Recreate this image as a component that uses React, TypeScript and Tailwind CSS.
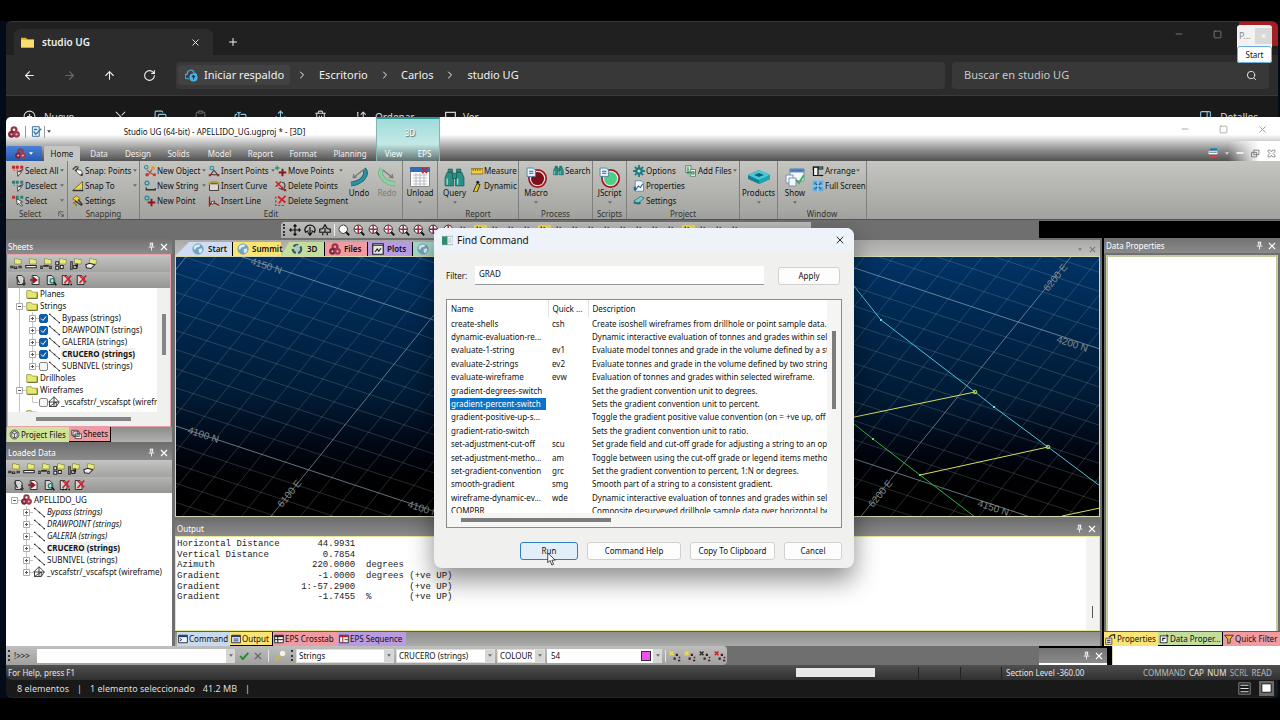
import { ReactNode } from 'react';
import { ArrowLeft, ArrowRight, ArrowUp, RotateCw, X, Plus, ChevronRight, Search, Minus, Square, Scissors, Copy, Clipboard, Trash2, CirclePlus, ArrowDownUp, PanelRight, TextCursorInput, Share } from 'lucide-react';

// ============ Data ============
interface Command {
  name: string;
  quick: string;
  description: string;
}

const COMMANDS: Command[] = [
  { name: 'create-shells', quick: 'csh', description: 'Create isoshell wireframes from drillhole or point sample data.' },
  { name: 'dynamic-evaluation-re...', quick: '', description: 'Dynamic interactive evaluation of tonnes and grades within selected' },
  { name: 'evaluate-1-string', quick: 'ev1', description: 'Evaluate model tonnes and grade in the volume defined by a string' },
  { name: 'evaluate-2-strings', quick: 'ev2', description: 'Evaluate tonnes and grade in the volume defined by two strings' },
  { name: 'evaluate-wireframe', quick: 'evw', description: 'Evaluation of tonnes and grades within selected wireframe.' },
  { name: 'gradient-degrees-switch', quick: '', description: 'Set the gradient convention unit to degrees.' },
  { name: 'gradient-percent-switch', quick: '', description: 'Sets the gradient convention unit to percent.' },
  { name: 'gradient-positive-up-s...', quick: '', description: 'Toggle the gradient positive value convention (on = +ve up, off' },
  { name: 'gradient-ratio-switch', quick: '', description: 'Sets the gradient convention unit to ratio.' },
  { name: 'set-adjustment-cut-off', quick: 'scu', description: 'Set grade field and cut-off grade for adjusting a string to an optimum' },
  { name: 'set-adjustment-metho...', quick: 'am', description: 'Toggle between using the cut-off grade or legend items method' },
  { name: 'set-gradient-convention', quick: 'grc', description: 'Set the gradient convention to percent, 1:N or degrees.' },
  { name: 'smooth-gradient', quick: 'smg', description: 'Smooth part of a string to a consistent gradient.' },
  { name: 'wireframe-dynamic-ev...', quick: 'wde', description: 'Dynamic interactive evaluation of tonnes and grades within selected' },
  { name: 'COMPBR', quick: '', description: 'Composite desurveyed drillhole sample data over horizontal benches' },
];

const OUTPUT_LINES = [
  'Horizontal Distance       44.9931',
  'Vertical Distance          0.7854',
  'Azimuth                  220.0000  degrees',
  'Gradient                  -1.0000  degrees (+ve UP)',
  'Gradient               1:-57.2900          (+ve UP)',
  'Gradient                  -1.7455  %       (+ve UP)',
];

const SHEET_STRINGS = [
  { name: 'Bypass (strings)', on: true },
  { name: 'DRAWPOINT (strings)', on: true },
  { name: 'GALERIA (strings)', on: true },
  { name: 'CRUCERO (strings)', on: true },
  { name: 'SUBNIVEL (strings)', on: false },
];

// ============ Icons ============
const Icon = ({ children, className = 'size-3' }: { children: ReactNode; className?: string }) => (
  <svg viewBox="0 0 16 16" fill="none" className={`${className} shrink-0`}>{children}</svg>
);

const Caret = ({ className = 'fill-[#6a6a6a]' }: { className?: string }) => (
  <svg viewBox="0 0 6 4" className={`h-[3px] w-[4px] shrink-0 ${className}`}><path d="M0 0h6L3 4z" /></svg>
);

const Trefoil = ({ className = 'size-3' }: { className?: string }) => (
  <Icon className={className}>
    <circle cx="8" cy="5" r="3.2" stroke="#9c3448" strokeWidth="3" />
    <circle cx="4.6" cy="11" r="3" fill="#e3b4bc" stroke="#7f2437" strokeWidth="3" />
    <circle cx="11.4" cy="11" r="3" fill="#e3b4bc" stroke="#a03c50" strokeWidth="3" />
  </Icon>
);

const Globe = () => (
  <Icon>
    <circle cx="8" cy="8" r="7" fill="#6fa5c4" />
    <path d="M3 4c2-2 5-3 8-2l-1 3-4 1-2 3-2-1zM9 8l4-1 1 3-3 4-2-2z" fill="#dcecf3" />
    <circle cx="8" cy="8" r="7" stroke="#7fa5bb" />
  </Icon>
);

const Pin = () => (
  <Icon className="size-[9px]"><path d="M5 2h6M6 2v6M10 2v6M9 2v6M3 9h10M8 9v6" stroke="#fff" strokeWidth="1.5" /></Icon>
);

const Cross = ({ className = 'size-[8px]', color = '#fff' }: { className?: string; color?: string }) => (
  <Icon className={className}><path d="M2 2l12 12M14 2L2 14" stroke={color} strokeWidth="2.4" /></Icon>
);

const Folder = () => (
  <Icon className="size-3"><path d="M1 3.5h6l1.5 2H15v8H1z" fill="#e5e86a" stroke="#8d8f3c" /><path d="M15 6v8H2" stroke="#55561f" /></Icon>
);

const StringLine = () => (
  <Icon className="size-[11px]"><path d="M1 2l14 12" stroke="#222" strokeWidth="1.2" /><path d="M0 1h2v2H0zM7 7h2v2H7zM14 13h2v2h-2z" fill="#222" /></Icon>
);

const Mesh = () => (
  <Icon className="size-[12px]"><path d="M8 1l7 7-4 6H2V8H1zM8 1v13M1 8h14M2 14l9-6v6" stroke="#222" strokeWidth="1.1" /></Icon>
);

const SelectIcon = ({ tone }: { tone: string }) => (
  <Icon>
    <path d="M0 1h4v4H0zM5 1h4v4H5zM11 1h4v4h-4z" fill={tone} />
    <path d="M2 6h2v2H2zM6 6h2v2H6z" fill={tone} opacity=".6" />
    <path d="M15 6l-6 3-1 6" stroke="#3c3c3c" strokeWidth="1.6" /><path d="M7 9l6 0-5 6z" fill="#f4f4f4" stroke="#333" />
  </Icon>
);

const SelectArrow = () => (
  <Icon>
    <path d="M0 1h4v4H0z" fill="#c33" /><path d="M5 1h4v4H5zM11 1h4v4h-4z" fill="#28827c" />
    <path d="M6 5l8 4-3 1 3 4-2 1-3-4-2 2z" fill="#fff" stroke="#222" />
  </Icon>
);

const SnapPoints = () => (
  <Icon><path d="M1 6l4-4 4 1M4 8l4-4" stroke="#333" strokeWidth="1.5" /><path d="M6 6l6 1 2 4-3 3-5-5z" fill="#fff" stroke="#333" /><circle cx="13" cy="13" r="1.6" fill="#333" /></Icon>
);
const SnapTo = () => (
  <Icon><path d="M1 14L14 2v12z" fill="#f1d648" stroke="#5c4f14" /><path d="M1 14h14" stroke="#333" strokeWidth="2" /><path d="M9 12l3-3v3z" fill="#b8b8b4" /></Icon>
);
const SnapSettings = () => (
  <Icon><path d="M1 5l5-4 5 4-4 4z" fill="#f3d434" stroke="#6d5b0e" /><path d="M4 8l9 6M8 6l6 7M2 10l4 4" stroke="#333" strokeWidth="1.6" /><circle cx="3" cy="13" r="2" fill="#d8a91f" /></Icon>
);
const NewObject = () => (
  <Icon><path d="M4 7l4 3 4-6M8 10l-3 4M8 10l6 4" stroke="#b4503c" strokeWidth="1.6" /><circle cx="12" cy="4" r="2.6" fill="#e79a32" /><circle cx="4" cy="13" r="2.3" fill="#c33" /><circle cx="14" cy="13" r="2" fill="#c33" /><circle cx="3" cy="3" r="2.3" stroke="#1d8f9a" strokeWidth="1.4" /></Icon>
);
const NewString = () => (
  <Icon><circle cx="4" cy="4" r="2.6" stroke="#1d8f9a" strokeWidth="1.6" /><path d="M3 10v3h12v-2" stroke="#333" strokeWidth="1.8" /></Icon>
);
const NewPoint = () => (
  <Icon><circle cx="4" cy="4" r="2.6" stroke="#1d8f9a" strokeWidth="1.6" /><path d="M10 5v10M5 10h10" stroke="#8e1420" strokeWidth="2.6" /></Icon>
);
const InsertPoints = () => (
  <Icon><circle cx="5" cy="4" r="2.4" stroke="#1d8f9a" strokeWidth="1.5" /><path d="M2 13h13M4 12l4-5 5 6" stroke="#333" strokeWidth="1.4" /><path d="M1 12h3v3H1zM12 12h3v3h-3z" fill="#a02a2a" /></Icon>
);
const InsertCurve = () => (
  <Icon><path d="M2 5h12v9H2z" fill="#d9d9cf" stroke="#333" strokeWidth="1.2" /><path d="M1 6c3-5 11-5 14 0" stroke="#b89318" strokeWidth="2" /></Icon>
);
const InsertLine = () => (
  <Icon><path d="M2 2v12l3-4 4 1 6 3" stroke="#a11c1c" strokeWidth="1.8" /><path d="M4 9l5-1-3 5z" fill="#fff" stroke="#333" /></Icon>
);
const MovePoints = () => (
  <Icon><path d="M3 1v6M0 4h6" stroke="#2c9a58" strokeWidth="1.8" /><path d="M10 5v10M5 10h10" stroke="#8e1420" strokeWidth="2.6" /></Icon>
);
const DeletePoints = () => (
  <Icon><path d="M1 2l7 7M8 2L1 9" stroke="#c8232c" strokeWidth="2.2" /><path d="M9 3c5 0 6 7 1 10M5 11l9 3" stroke="#444" strokeWidth="1.5" /><path d="M8 9h3v3H8zM12 12h3v3h-3z" fill="#a02a2a" /></Icon>
);
const DeleteSegment = () => (
  <Icon><path d="M1 2v12h13" stroke="#b33" strokeWidth="1.6" strokeDasharray="3 2" /><path d="M4 2l10 8M14 1L5 11" stroke="#d4202a" strokeWidth="2.4" /></Icon>
);
const Curl = ({ stroke, edge, flip = false }: { stroke: string; edge: string; flip?: boolean }) => (
  <svg viewBox="0 0 20 20" fill="none" className={flip ? 'size-5 -scale-x-100' : 'size-5'}>
    <path d="M15 2c5 6-3 14-13 15" stroke={edge} strokeWidth="4.600" />
    <path d="M15 2c5 6-3 14-13 15" stroke={stroke} strokeWidth="3" />
    <path d="M4 11L14 3M4 11l4-1M4 11l1-4" stroke="#777" strokeWidth="1.2" />
  </svg>
);
const UnloadIcon = () => (
  <svg viewBox="0 0 20 20" className="size-5">
    <path d="M.5 1h19v18.500H.5z" fill="#fff" stroke="#888" /><path d="M0 0h20v5H0z" fill="#2f6db5" />
    <path d="M3 8h14M3 11h14M3 14h14M3 17h14M6 6v13M10 6v13M14 6v13" stroke="#b7bcc4" /><path d="M12 1l5 5M17 1l-5 5" stroke="#d0202a" strokeWidth="1.8" />
  </svg>
);
const Binoculars = ({ className = 'size-[21px]', fill = '#2b8f86' }: { className?: string; fill?: string }) => (
  <svg viewBox="0 0 20 20" className={`${className} shrink-0`} fill={fill} stroke="#135a55" strokeWidth=".7">
    <path d="M4 2h4v3H4zM12 2h4v3h-4zM3 5h5l1 5v8H1v-8zM12 5h5l2 5v8h-8v-8z" /><path d="M8 6h4v5H8z" /><path d="M3 11v6M13 11v6" stroke="#8fd8cf" strokeWidth="1.4" />
  </svg>
);
const Ruler = () => <Icon><path d="M0 5h16v7H0z" fill="#f0cf3e" stroke="#70580c" /><path d="M3 5v3M6 5v3M9 5v3M12 5v3" stroke="#5b480b" /></Icon>;
const Dynamic = () => <Icon><circle cx="9" cy="3" r="2" fill="#222" /><path d="M8 5l4 1-4 10H3l3-7z" fill="#e8c81e" stroke="#222" strokeWidth="1.2" /></Icon>;
const Disc = ({ fill }: { fill: string }) => (
  <svg viewBox="0 0 20 20" className="size-[21px]">
    <circle cx="11" cy="11" r="8.200" fill="#e9e2e2" stroke="#a31420" strokeWidth="1.6" /><circle cx="11" cy="11" r="6.200" fill={fill} />
    <path d="M1 1h6l2 2v6H1z" fill="#e9f2f6" stroke="#4a7a9a" strokeWidth=".8" /><path d="M3 4h4M3 6h4" stroke="#2463a6" />
  </svg>
);
const Gear = () => <Icon><circle cx="8" cy="8" r="5" fill="#1c7d87" /><path d="M8 0v16M0 8h16M2.500 2.500l11 11M13.500 2.500l-11 11" stroke="#1c7d87" strokeWidth="2.4" /><circle cx="8" cy="8" r="2" fill="#cfd4d2" /></Icon>;
const PropsIcon = () => <Icon><path d="M3 1h8l3 3v11H3z" fill="#f5f8fa" stroke="#5a7890" /><path d="M4 13l3-5 3 2 3-5" stroke="#1e6fb0" strokeWidth="1.6" /><path d="M1 9h3v5H1z" fill="#2a5f9a" /></Icon>;
const SetIcon = () => <Icon><path d="M1 8l9-6 5 2-8 7z" fill="#7ac9d0" stroke="#256e78" /><path d="M1 11c3-2 5 3 9-1" stroke="#256e78" strokeWidth="2.4" /></Icon>;
const AddFiles = () => <Icon><path d="M1 1h7v9H1z" fill="#e8efe9" stroke="#3a6c4a" /><path d="M7 6h7v9H7z" fill="#fff" stroke="#3a6c4a" /><path d="M4 3v8l3-2M9 9h3v3H9z" stroke="#1f8c4d" strokeWidth="1.6" /></Icon>;
const Products = () => (
  <svg viewBox="0 0 22 20" className="h-5 w-[22px]">
    <path d="M0 8l11-5 11 5v4l-11 5-11-5z" fill="#167f90" /><path d="M0 8l11-5 11 5-11 5z" fill="#45cbd8" /><path d="M6 8l5-2 5 2-5 2z" fill="#0f5f70" /><path d="M11 13l11-5v4l-11 5z" fill="#1ca3b4" />
  </svg>
);
const ShowIcon = () => (
  <svg viewBox="0 0 20 20" className="size-5" fill="#f4f8fc" stroke="#7d93ad">
    <path d="M5 2h14v12H5z" /><path d="M5 2h14v3H5z" fill="#3c78c4" /><path d="M1 8h7v8H1z" /><path d="M4 11h7v8H4z" /><path d="M11 13l3 3 5-8" fill="none" stroke="#3fae62" strokeWidth="2" />
  </svg>
);
const Arrange = () => <Icon><path d="M1 2h14v4H1z" fill="#111" /><path d="M2 3h6v11H2z" fill="#f4f4f4" stroke="#111" strokeWidth="1.6" /><path d="M9 3h5v2H9z" fill="#30a0a0" /><path d="M9 14h6" stroke="#111" strokeWidth="1.6" /></Icon>;
const FullScreen = () => <Icon><path d="M1 1h14v14H1z" fill="#5aa6d8" stroke="#8dc0e2" /><path d="M8 1v14M1 8h14" stroke="#d8eefa" /><path d="M4 4l3 3M12 4L9 7M4 12l3-3M12 12L9 9" stroke="#135080" strokeWidth="1.4" /></Icon>;

const NavIcon = ({ kind }: { kind: 'move' | 'rotate' | 'fly' }) => (
  <Icon className="size-[12px]">
    {kind === 'move' && <path d="M8 1v14M1 8h14M6 3l2-2 2 2M6 13l2 2 2-2M3 6L1 8l2 2M13 6l2 2-2 2" stroke="#111" strokeWidth="1.6" />}
    {kind === 'rotate' && <path d="M1 9c0-10 14-10 14 0M8 4v10M5 11l3 4 3-4M1 7l1 4 4-2M15 7l-1 4-4-2" stroke="#111" strokeWidth="1.6" />}
    {kind === 'fly' && <path d="M8 1l3 5 4 1v4H1V7l4-1zM5 12v3M11 12v3M8 5v6" stroke="#111" strokeWidth="1.6" />}
  </Icon>
);
const ZoomIcon = ({ tint }: { tint: string }) => (
  <Icon className="size-[12px]">
    <circle cx="7" cy="7" r="5.500" fill="#fff" stroke="#222" strokeWidth="1.3" /><path d="M7 2v10M2 7h10" stroke={tint} strokeWidth="2" /><path d="M11 11l4 4" stroke="#111" strokeWidth="2.4" />
  </Icon>
);

const FOLDER_TOOLS = [
  'M1 11h3v2H1zM6 12h3v2H6zM12 11h3v2h-3z',
  'M1 10h14v3H1z',
  'M1 11h2v3H1zM5 10h6v1H5zM13 11h2v3h-2z',
  'M1 5h4v4H1zM1 11h4v4H1zM7 10h4v4H7z',
  'M1 5h2v10H1zM5 10h4v4H5zM8 8h2v4H8z',
  'M1 9l5-2 7 2-5 5-6-1z',
];

const PanelTools = () => (
  <>
    <div className="flex h-[17px] items-center gap-[3px] bg-gradient-to-b from-[#c4c4c2] to-[#a3a3a1] pl-[2px]">
      {FOLDER_TOOLS.map((d) => (
        <button key={d} title="Folder tool" className="flex">
          <Icon><path d="M6 1h4l1 1h4v6H6z" fill="#e9ea7c" stroke="#77783a" strokeWidth=".8" /><path d={d} fill="#eef0ee" stroke="#2a2a2a" strokeWidth="1.4" /></Icon>
        </button>
      ))}
    </div>
    <div className="flex h-4 items-center gap-[3px] bg-gradient-to-b from-[#b4b4b2] to-[#959593] pl-[7px]">
      {['attach', 'import', 'find', 'unload', 'remove'].map((t, i) => (
        <button key={t} title={t} className="flex">
          <Icon>
            <path d="M3 2h6l3 3v9H3z" fill={i === 1 ? '#f4f4f4' : '#d5d5d3'} stroke="#222" strokeWidth="1.2" />
            {i === 0 && <path d="M2 4l4 8M12 8v6M10 12l2 3 2-3" stroke="#333" strokeWidth="1.5" />}
            {i === 1 && <path d="M0 8h7M5 5l4 3-4 3z" stroke="#a31420" fill="#a31420" strokeWidth="2" />}
            {i === 2 && <><circle cx="10" cy="9" r="3" stroke="#1d7a70" strokeWidth="1.6" /><path d="M12 11l3 4" stroke="#111" strokeWidth="2" /></>}
            {i > 2 && <path d="M6 2l9 9M15 2l-9 10" stroke="#d41e28" strokeWidth="2.2" />}
            {i === 3 && <path d="M6 14h2M10 14h2M14 14h2" stroke="#111" strokeWidth="2" />}
          </Icon>
        </button>
      ))}
    </div>
  </>
);

const PanelHeader = ({ title }: { title: string }) => (
  <header className="flex h-[15px] shrink-0 items-center gap-1 bg-gradient-to-b from-[#727272] to-[#8b8b8b] pr-1 pl-[2px] text-white">
    <h2 className="flex-1">{title}</h2>
    <button title="Auto hide" className="flex"><Pin /></button>
    <button title="Close" className="flex"><Cross /></button>
  </header>
);

// ============ Ribbon ============
const Item = ({ icon, label, menu = false }: { icon: ReactNode; label: string; menu?: boolean }) => (
  <button className="flex h-[15px] w-full items-center gap-px whitespace-nowrap">
    {icon}<span className="flex-1 text-left">{label}</span>{menu && <Caret />}
  </button>
);

const Big = ({ icon, label, menu = false, className = 'w-[34px]' }: { icon: ReactNode; label: string; menu?: boolean; className?: string }) => (
  <button className={`flex shrink-0 flex-col items-center pt-1 ${className}`}>
    <span className="flex h-5 items-center">{icon}</span>
    <span className="leading-3">{label}</span>
    {menu && <Caret className="mt-[2px] fill-[#6a6a6a]" />}
  </button>
);

const Group = ({ caption, className, launcher = false, children }: { caption?: string; className: string; launcher?: boolean; children: ReactNode }) => (
  <section className={`flex shrink-0 flex-col border-r border-[#7f7f7d] pt-[2px] ${className}`}>
    <div className="flex h-[45px]">{children}</div>
    <div className="flex h-[11px] items-center justify-center text-[#333]">
      <span className={launcher ? 'flex-1 pr-1 text-center' : ''}>{caption}</span>
      {launcher && <Icon className="mr-[3px] size-[6px]"><path d="M2 14V2h12M6 6l8 8M14 8v6H8" stroke="#444" strokeWidth="2" /></Icon>}
    </div>
  </section>
);

const Ribbon = () => (
  <div className="flex h-[59px] shrink-0 border-b border-[#555] bg-gradient-to-b from-[#c5c6c2] to-[#a2a39f] text-[#111]">
    <Group caption="Select" className="w-[62px]" launcher>
      <div className="w-full pr-[3px] pl-[6px]">
        <Item icon={<SelectIcon tone="#c8232c" />} label="Select All" menu />
        <Item icon={<SelectIcon tone="#28827c" />} label="Deselect" menu />
        <Item icon={<SelectArrow />} label="Select" menu />
      </div>
    </Group>
    <Group caption="Snapping" className="w-[72px]">
      <div className="w-full pr-[2px] pl-[4px]">
        <Item icon={<SnapPoints />} label="Snap: Points" menu />
        <Item icon={<SnapTo />} label="Snap To" menu />
        <Item icon={<SnapSettings />} label="Settings" />
      </div>
    </Group>
    <Group caption="Edit" className="w-[263px]">
      <div className="w-[68px] shrink-0 pr-[2px] pl-[4px]">
        <Item icon={<NewObject />} label="New Object" menu />
        <Item icon={<NewString />} label="New String" menu />
        <Item icon={<NewPoint />} label="New Point" />
      </div>
      <div className="w-[67px] shrink-0">
        <Item icon={<InsertPoints />} label="Insert Points" menu />
        <Item icon={<InsertCurve />} label="Insert Curve" />
        <Item icon={<InsertLine />} label="Insert Line" />
      </div>
      <div className="w-[70px] shrink-0 pr-[2px]">
        <Item icon={<MovePoints />} label="Move Points" menu />
        <Item icon={<DeletePoints />} label="Delete Points" />
        <Item icon={<DeleteSegment />} label="Delete Segment" />
      </div>
      <Big icon={<Curl stroke="#2a91a0" edge="#1d5f6a" />} label="Undo" className="w-[28px]" />
      <Big icon={<Curl stroke="#8fd0a4" edge="#6fae84" flip />} label="Redo" className="w-[28px] text-[#7c7c7a]" />
    </Group>
    <Group className="w-[35px]"><Big icon={<UnloadIcon />} label="Unload" menu /></Group>
    <Group caption="Report" className="w-[81px]">
      <Big icon={<Binoculars />} label="Query" menu className="w-[33px]" />
      <div className="flex-1">
        <Item icon={<Ruler />} label="Measure" />
        <Item icon={<Dynamic />} label="Dynamic" />
      </div>
    </Group>
    <Group caption="Process" className="w-[74px]">
      <Big icon={<Disc fill="#7c0f18" />} label="Macro" menu />
      <div className="flex-1"><Item icon={<Binoculars className="size-[11px]" />} label="Search" /></div>
    </Group>
    <Group caption="Scripts" className="w-[34px]"><Big icon={<Disc fill="#4ccf86" />} label="JScript" menu className="w-[33px]" /></Group>
    <Group caption="Project" className="w-[113px]">
      <div className="w-[58px] shrink-0 pl-[6px]">
        <Item icon={<Gear />} label="Options" />
        <Item icon={<PropsIcon />} label="Properties" />
        <Item icon={<SetIcon />} label="Settings" />
      </div>
      <div className="flex-1 pr-1"><Item icon={<AddFiles />} label="Add Files" menu /></div>
    </Group>
    <Group className="w-[38px]"><Big icon={<Products />} label="Products" menu className="w-[37px]" /></Group>
    <Group caption="Window" className="w-[89px]">
      <Big icon={<ShowIcon />} label="Show" menu />
      <div className="flex-1">
        <div className="pr-2"><Item icon={<Arrange />} label="Arrange" menu /></div>
        <Item icon={<FullScreen />} label="Full Screen" />
      </div>
    </Group>
  </div>
);

const RIBBON_TABS = [
  { label: 'Data', width: 'w-[38px]' },
  { label: 'Design', width: 'w-[40px]' },
  { label: 'Solids', width: 'w-[41px]' },
  { label: 'Model', width: 'w-[41px]' },
  { label: 'Report', width: 'w-[41px]' },
  { label: 'Format', width: 'w-[44px]' },
  { label: 'Planning', width: 'w-[50px]' },
];

const StudioHeader = () => (
  <header className="flex h-11 shrink-0 overflow-hidden rounded-tl-[5px] bg-gradient-to-b from-white from-40% via-[#8f8f8f] via-75% to-[#525252]">
    <div className="flex w-[370px] shrink-0 flex-col">
      <div className="flex h-[29px] items-center text-[#111]">
        <span className="ml-[2px] flex"><Trefoil className="size-[12px]" /></span>
        <span className="mx-[5px] h-3 w-px bg-[#999]" />
        <button title="Save" className="flex"><Icon className="size-[11px]"><path d="M2 1h10v14H2z" fill="#eef4f8" stroke="#3a6d90" strokeWidth="1.4" /><path d="M4 5h5M4 8l3 4 8-8" stroke="#2a7db8" strokeWidth="2" /></Icon></button>
        <span className="mx-[2px] h-3 w-px bg-[#999]" />
        <Caret className="fill-[#444]" />
        <h1 className="flex-1 pl-[2px] text-center">Studio UG (64-bit) - APELLIDO_UG.ugproj * - [3D]</h1>
      </div>
      <nav className="flex h-[15px] items-stretch text-[#eee]">
        <button title="Application menu" className="flex w-9 items-center justify-center gap-[3px] rounded-t-[2px] bg-gradient-to-b from-[#4d83d6] to-[#2459ad]">
          <Trefoil className="size-[11px]" /><Caret className="fill-white" />
        </button>
        <button className="ml-[2px] w-9 rounded-t-[2px] bg-[#c5c6c2] text-[#111]">Home</button>
        {RIBBON_TABS.map((t) => <button key={t.label} className={t.width}>{t.label}</button>)}
      </nav>
    </div>
    <div className="flex w-16 shrink-0 flex-col border-x border-t-2 border-x-[#84b5b5] border-t-[#2a9a9c] bg-gradient-to-b from-[#9fdcda] via-[#c4e9e6] via-60% to-[#5f7372] text-white">
      <div className="flex h-[27px] items-center justify-center pl-1 [text-shadow:1px_1px_1px_#555]">3D</div>
      <nav className="flex h-[15px]"><button className="w-[33px]">View</button><button className="flex-1">EPS</button></nav>
    </div>
    <div className="flex flex-1 flex-col items-end">
      <div className="flex h-6 items-center gap-[29px] pr-[12px] text-[#999]">
        <button title="Minimize"><Minus className="size-[10px]" /></button>
        <button title="Maximize"><Square className="size-[9px]" /></button>
        <button title="Close"><X className="size-[11px]" /></button>
      </div>
      <div className="flex flex-1 items-center gap-[7px] bg-gradient-to-r from-transparent from-50% to-white to-80% pt-1 pr-1 pl-8">
        <button title="Language" className="flex"><Icon className="size-[10px]"><path d="M4 0h11v4H4z" fill="#36a0c8" /><path d="M1 5h14v5H1z" fill="#fff" /><path d="M3 11h11v5H3z" fill="#d43d44" /><path d="M2 7h12M3 2h11" stroke="#245" /></Icon></button>
        <Caret className="fill-[#ddd]" />
        <button title="Minimize document"><Icon className="size-[8px]"><path d="M1 8h14" stroke="#fff" strokeWidth="3" /></Icon></button>
        <button title="Restore document"><Icon className="size-[9px]"><path d="M5 2h9v8H5zM1 6h9v8H1z" stroke="#777" strokeWidth="1.6" /></Icon></button>
        <button title="Close document"><Icon className="size-[9px]"><path d="M2 2h4l2 3 2-3h4v3l-3 3 3 3v3h-4l-2-3-2 3H2v-3l3-3-3-3z" stroke="#777" strokeWidth="1.4" /></Icon></button>
      </div>
    </div>
  </header>
);

const ZOOM_TINTS = ['#ffffff', '#b3243a', '#b3243a', '#c8405a', '#a32a3a', '#b3243a', '#8b1f4a', '#b3243a'];
const MORE_TOOLS = ['#b9b9b7', '#f0d75a', '#b9b9b7', '#b9b9b7', '#b9b9b7', '#f0d75a', '#b9b9b7', '#b9b9b7', '#b9b9b7', '#b9b9b7', '#b9b9b7', '#b9b9b7', '#b9b9b7', '#b9b9b7', '#f0d75a', '#b9b9b7', '#b9b9b7', '#b9b9b7'];

const ViewToolbar = () => (
  <div className="flex h-[18px] shrink-0 bg-[#6f6f6f]">
    <div className="mt-[2px] ml-[275px] flex w-[530px] shrink-0 items-center gap-[3px] overflow-hidden rounded-tl-sm bg-gradient-to-b from-[#bdbdbb] to-[#a9a9a7] pl-[2px]">
      <span className="mr-[1px] h-3 border-l-2 border-dotted border-[#333]" />
      <button title="Pan" className="flex"><NavIcon kind="move" /></button>
      <button title="Rotate" className="flex"><NavIcon kind="rotate" /></button>
      <button title="Fly" className="flex"><NavIcon kind="fly" /></button>
      <span className="h-3 w-px bg-[#eee]" />
      {ZOOM_TINTS.map((t, i) => <button key={i} title="Zoom" className="flex"><ZoomIcon tint={t} /></button>)}
      {MORE_TOOLS.map((c, i) => (
        <button key={i} title="Tool" className="flex">
          <Icon className="size-[13px]"><path d="M0 1h16v15H0z" fill={c} /><path d="M4 3v9M7 4l5 5M4 8h7" stroke="#3a3550" strokeWidth="1.6" /></Icon>
        </button>
      ))}
    </div>
    <div className="flex-1" />
    <div className="mt-px w-[241px] bg-black" />
  </div>
);

// ============ Trees ============
const Branch = ({ sign, last = false, line = true }: { sign?: '+' | '-'; last?: boolean; line?: boolean }) => (
  <span className="flex h-3 w-[13px] shrink-0 items-center justify-center">
    <svg viewBox="0 0 13 12" fill="none" className="h-3 w-[13px]">
      {line && <path d={last ? 'M6.500 0V6' : 'M6.500 0V12'} stroke="#c4c4c4" />}
      {sign && <><path d="M9 6.500h4" stroke="#c4c4c4" /><path d="M3.500 3.500h6v6h-6z" fill="#fff" stroke="#aaa" /><path d="M5 6.500h3" stroke="#555" /></>}
      {sign === '+' && <path d="M6.500 5v3" stroke="#555" />}
      {!sign && last && <path d="M6.500 6.500h6" stroke="#c4c4c4" />}
    </svg>
  </span>
);

const Check = ({ on }: { on: boolean }) => (
  <span className="relative flex size-[9px] shrink-0">
    <input type="checkbox" defaultChecked={on} className="peer size-[9px] appearance-none rounded-[2px] border border-[#888] bg-[#f6f6f6] checked:border-[#0b5cad] checked:bg-[#0b5cad]" />
    <svg viewBox="0 0 9 9" fill="none" className="pointer-events-none absolute inset-0 hidden peer-checked:block"><path d="M2 4.500l2 2 3-4" stroke="#fff" /></svg>
  </span>
);

const FolderRow = ({ label, sign }: { label: string; sign?: '+' | '-' }) => (
  <li className="flex h-3 items-center gap-[2px]"><span className="flex"><Branch sign={sign} /><Folder /></span>{label}</li>
);

const SheetsPanel = () => (
  <section>
    <div className="pt-px"><PanelHeader title="Sheets" /></div>
    <div className="mx-px border border-[#e8a0a8] bg-white">
      <PanelTools />
      <div className="flex h-[124px] overflow-hidden text-[#111]">
        <ul className="flex-1 overflow-hidden pl-[5px] whitespace-nowrap">
          <FolderRow label="Planes" />
          <FolderRow label="Strings" sign="-" />
          {SHEET_STRINGS.map((s, i) => (
            <li key={s.name} className="flex h-3 items-center">
              <Branch />
              <Branch sign="+" last={i === SHEET_STRINGS.length - 1} />
              <label className="flex items-center gap-[1px]">
                <Check on={s.on} /><StringLine />
                <span className={s.name.startsWith('CRUCERO') ? 'bg-[#f0f0f0] pl-px font-bold' : 'pl-px'}>{s.name}</span>
              </label>
            </li>
          ))}
          <FolderRow label="Drillholes" />
          <FolderRow label="Wireframes" sign="-" />
          <li className="flex h-3 items-center">
            <Branch /><Branch last />
            <label className="flex items-center"><Check on={false} /><Mesh /><span className="pl-px">_vscafstr/_vscafspt (wireframe)</span></label>
          </li>
          <FolderRow label="" />
        </ul>
        <div className="flex w-[13px] flex-col items-center bg-[#f0f0ee] pt-[26px]"><span className="h-[41px] w-1 bg-[#868686]" /></div>
      </div>
      <div className="flex h-[14px] items-center bg-[#f0f0ee] pl-[28px]"><span className="h-1 w-[95px] bg-[#868686]" /></div>
    </div>
    <div className="flex h-[15px] bg-gradient-to-b from-[#8d8d8b] to-[#b0b0ae] text-[#111]">
      <button className="ml-px flex w-[62px] items-center gap-px bg-[#cfe39a] pl-[2px] whitespace-nowrap">
        <Icon className="size-[11px]"><circle cx="8" cy="8" r="6.500" fill="#e8ecea" stroke="#222" /><path d="M4 5l4-2 4 2v6l-4 2-4-2zM4 5l4 2 4-2M8 7v6" stroke="#222" /></Icon>Project Files
      </button>
      <button className="flex w-[42px] items-center gap-px border-r border-b border-black bg-[#f09aa2] pl-[2px]">
        <Icon className="size-[11px]"><path d="M1 2h9v7H1zM3 4h9v7H3zM6 7h9v7H6z" fill="#f7f7f7" stroke="#222" /></Icon>Sheets
      </button>
    </div>
  </section>
);

const LoadedPanel = () => (
  <section className="mt-[3px] flex flex-1 flex-col">
    <PanelHeader title="Loaded Data" />
    <PanelTools />
    <ul className="flex-1 bg-white pt-px pl-[2px] whitespace-nowrap text-[#111]">
      <li className="flex h-3 items-center gap-[2px]"><span className="flex"><Branch sign="-" line={false} /><Trefoil className="size-[11px]" /></span>APELLIDO_UG</li>
      {SHEET_STRINGS.map((s) => {
        const style = s.name.startsWith('CRUCERO') ? 'bg-[#f0f0f0] font-bold' : s.on ? 'italic' : '';
        return (
          <li key={s.name} className="flex h-3 items-center pl-[12px]">
            <Branch sign="+" /><span className="pr-[2px] pl-[1px]"><StringLine /></span><span className={style}>{s.name}</span>
          </li>
        );
      })}
      <li className="flex h-3 items-center pl-[12px]"><Branch sign="+" last /><span className="pr-[2px]"><Mesh /></span>_vscafstr/_vscafspt (wireframe)</li>
    </ul>
  </section>
);

// ============ 3D view ============
// 5 m grid: northings step 19 px down the view, eastings 29.5 px across it
const northings = Array.from({ length: 42 }, (_, i) => i - 30);
const eastings = Array.from({ length: 45 }, (_, i) => i - 16);

const View3D = () => (
  <div className="min-h-0 flex-1 border border-[#d5d8b0] bg-gradient-to-b from-[#003366] via-[#001a33] via-55% to-black">
    <svg viewBox="176 257 923 259" preserveAspectRatio="xMinYMin slice" fill="none" className="size-full">
      {northings.map((n) => (
        <path key={n} d={`M100 ${401 + n * 19.1}l1100 363`} stroke="#9ab0bd" strokeOpacity={n % 10 === 0 ? 0.65 : 0.3} strokeWidth={n % 10 === 0 ? 1 : 0.8} />
      ))}
      {eastings.map((e) => (
        <path key={e} d={`M${309 + e * 29.5 + 200} 222.300l-300 370.500`} stroke="#9ab0bd" strokeOpacity={e % 10 === 0 ? 0.6 : 0.3} strokeWidth={e % 10 === 0 ? 1 : 0.8} />
      ))}
      <g fill="#80888c" fontSize="10" fontFamily="Liberation Sans, sans-serif">
        <text transform="translate(250 264) rotate(18)">4150 N</text>
        <text transform="translate(187 433) rotate(18)">4100 N</text>
        <text transform="translate(407 507) rotate(18)">4100 N</text>
        <text transform="translate(1056 342) rotate(18)">4200 N</text>
        <text transform="translate(977 506) rotate(18)">4150 N</text>
        <text transform="translate(282 508) rotate(-51)">6100 E</text>
        <text transform="translate(873 508) rotate(-51)">6200 E</text>
        <text transform="translate(1048 292) rotate(-51)">6200 E</text>
      </g>
      <path d="M840 268l14 18 27 34 94 72 19 15 54 40 52 39" stroke="#4fc3dc" />
      <path d="M840 420l135-28M920 475l128-28M1062 516l38-8" stroke="#d6dc5c" />
      <path d="M840 413l33 26 47 36 55 42" stroke="#2fb43c" />
      <g stroke="#b6e04c"><circle cx="975" cy="392" r="1.800" /><circle cx="1048" cy="447" r="1.800" /></g>
      <path d="M880 319h2v2h-2zM993 406h2v2h-2z" fill="#6fe0f0" /><path d="M872 438h2v2h-2zM919 474h2v2h-2z" fill="#6fe05c" />
    </svg>
  </div>
);

const DocTabs = () => (
  <div className="flex h-4 shrink-0 bg-gradient-to-b from-[#a9a9a7] to-[#c0c0be] pt-[2px] font-semibold text-[#111]">
    <button className="flex w-[57px] items-center gap-1 bg-[#cfdcf4] pl-[17px] [clip-path:polygon(14px_0,100%_0,100%_100%,0_100%)]"><Globe />Start</button>
    <button className="flex w-[49px] items-center gap-[3px] border-l border-black bg-[#fbe374] pl-[4px]"><Globe />Summit</button>
    <button className="flex w-[43px] items-center gap-1 bg-[#c3dd9c] pl-[10px] [clip-path:polygon(8px_0,100%_0,100%_100%,0_100%)]">
      <Icon><circle cx="8" cy="8" r="5.500" stroke="#3d5a66" strokeWidth="3" strokeDasharray="7 3" /><path d="M8 2l4 6-4 5-4-5z" fill="#a9c6d0" /></Icon>3D
    </button>
    <button className="flex w-[43px] items-center gap-[3px] border-l border-black bg-[#f09aa2] pl-[4px]"><Trefoil />Files</button>
    <button className="flex w-[45px] items-center gap-[3px] border-l border-black bg-[#b89be0] pl-[4px]">
      <Icon><path d="M1 1h14v14H1z" fill="#e6e6e6" stroke="#222" strokeWidth="1.6" /><path d="M1 3h14M4 12l3-4 2 3 3-4" stroke="#222" strokeWidth="1.6" /></Icon>Plots
    </button>
    <button title="VR" className="flex w-[60px] items-center border-l border-black bg-[#a5d8c8] pl-[4px]"><Globe /></button>
    <div className="flex flex-1 items-center justify-end gap-[7px] pr-1"><Caret className="fill-[#777]" /><Cross className="size-[7px]" color="#777" /></div>
  </div>
);

const BottomTab = ({ label, icon, className }: { label: string; icon: ReactNode; className: string }) => (
  <button className={`flex items-center gap-px pl-px whitespace-nowrap ${className}`}>{icon}{label}</button>
);

const WindowIcon = ({ mark = '#203a7a', d }: { mark?: string; d: string }) => (
  <Icon className="size-[10px]"><path d="M1 2h14v12H1z" fill="#f3f3f3" stroke="#222" strokeWidth="1.4" /><path d="M1 3.500h14" stroke={mark} strokeWidth="3" /><path d={d} stroke={mark} strokeWidth="1.6" /></Icon>
);

const Center = () => (
  <div className="mr-[2px] flex min-w-0 flex-1 flex-col pt-[2px]">
    <DocTabs />
    <View3D />
    <div className="mt-1 shrink-0"><PanelHeader title="Output" /></div>
    <div className="flex h-[95px] shrink-0 border border-[#e6e69a] bg-white">
      <div className="grid h-[66px] flex-1 grid-rows-6 pt-[2px] pl-[1px] text-[9px] text-[#222]">
        {OUTPUT_LINES.map((l) => <pre key={l} className="font-['Liberation_Mono',monospace] leading-[10px]">{l}</pre>)}
      </div>
      <div className="flex w-[13px] flex-col items-center justify-end bg-[#f3f3f1] pb-[12px]"><span className="h-3 w-px bg-[#555]" /></div>
    </div>
    <div className="flex h-[15px] shrink-0 border-t border-[#5c5c5c] bg-gradient-to-b from-[#8f8f8d] to-[#aaaaa8] text-[#111]">
      <BottomTab label="Command" icon={<WindowIcon d="M3 7l3 2-3 2" />} className="ml-[2px] w-[53px] bg-[#c6daf0]" />
      <BottomTab label="Output" icon={<WindowIcon d="M4 8h8M4 11h8" />} className="w-[43px] border-r border-b border-black bg-[#fbe374]" />
      <BottomTab label="EPS Crosstab" icon={<WindowIcon mark="#222" d="M6 4v10M1 9h14" />} className="w-[65px] bg-[#f09aa2]" />
      <BottomTab label="EPS Sequence" icon={<WindowIcon mark="#b3202c" d="M6 4v10M9 9h5" />} className="w-[68px] bg-[#b89be0]" />
    </div>
  </div>
);

const RightPanel = () => (
  <aside className="flex w-[178px] shrink-0 flex-col border-l-2 border-black">
    <PanelHeader title="Data Properties" />
    <div className="mx-[2px] mt-[2px] flex-1 border-x-2 border-t-2 border-[#c8c99c] bg-white" />
    <div className="flex h-[15px] border-t border-[#5c5c5c] text-[#111]">
      <BottomTab label="Properties" className="w-[54px] bg-[#fbe374]" icon={<Icon className="size-[11px]"><path d="M1 6h9v9H1z" fill="#eee" stroke="#222" /><path d="M3 9h5M3 12h5M6 5l3-3 5-1v6" stroke="#222" strokeWidth="1.6" /></Icon>} />
      <BottomTab label="Data Proper..." className="w-[65px] border-r border-b border-black bg-[#c3dd9c]" icon={<Icon className="size-[10px]"><path d="M2 3h11v11H2z" fill="#f7f7f7" stroke="#222" strokeWidth="1.4" /><path d="M6 11V7h4M12 1l3 3" stroke="#222" strokeWidth="1.8" /></Icon>} />
      <BottomTab label="Quick Filter" className="flex-1 bg-[#f09aa2]" icon={<Icon className="size-[10px]"><path d="M1 2h14l-5 6v6l-4 1V8z" fill="#e8b43a" stroke="#222" strokeWidth="1.3" /></Icon>} />
    </div>
  </aside>
);

// ============ Command and status bars ============
const Combo = ({ label, value, className }: { label: string; value: string; className: string }) => (
  <div className={`flex h-[14px] shrink-0 border border-[#ddd] bg-white ${className}`}>
    <select aria-label={label} className="min-w-0 flex-1 appearance-none bg-white pl-[2px] outline-none"><option>{value}</option></select>
    <span className="flex w-[9px] items-center justify-center bg-[#d6d6d4]"><Caret /></span>
  </div>
);

const EDIT_TOOLS = ['#e8e04a', '#e8e04a', '#333333', '#c8232c'];

const CommandBar = () => (
  <div className="flex h-[19px] shrink-0 bg-[#6f6f6f] text-[#111]">
    <div className="flex w-[721px] shrink-0 items-center rounded-r-sm bg-gradient-to-b from-[#bfbfbd] to-[#a0a09e]">
      <span className="ml-[2px] h-[11px] border-l-2 border-dotted border-[#333]" />
      <label htmlFor="cmd" className="w-[27px] pl-[4px]">!&gt;&gt;&gt;</label>
      <div className="flex h-[14px] w-[198px] bg-white">
        <input id="cmd" className="min-w-0 flex-1 px-[2px] outline-none" />
        <span className="flex w-[9px] items-center justify-center bg-[#d6d6d4]"><Caret /></span>
      </div>
      <button title="Accept" className="ml-[4px]"><Icon className="size-[10px]"><path d="M2 8l4 5 9-10" stroke="#1e8c2c" strokeWidth="3" /></Icon></button>
      <button title="Cancel command" className="ml-[5px]"><Cross className="size-[8px]" color="#666" /></button>
      <span className="mx-[6px] h-3 w-px bg-[#e4e4e4]" />
      <button title="Wand"><Icon className="size-[11px]"><path d="M1 15L9 7" stroke="#c9b93a" strokeWidth="2.4" /><circle cx="11" cy="5" r="4" fill="#f1f1e6" /></Icon></button>
      <span className="mr-[3px] ml-[5px] h-[11px] border-l-2 border-dotted border-[#333]" />
      <div className="flex flex-1 items-center gap-[2px]">
        <Combo label="Object type" value="Strings" className="w-[98px]" />
        <Combo label="Current object" value="CRUCERO (strings)" className="w-[99px]" />
        <Combo label="Attribute" value="COLOUR" className="w-[48px]" />
        <div className="flex h-[14px] w-[115px] items-center bg-white">
          <input aria-label="Attribute value" defaultValue="54" className="min-w-0 flex-1 px-1 outline-none" />
          <span className="mr-[2px] size-[10px] border border-[#333] bg-[#f04ff0]" />
          <span className="flex h-full w-[9px] items-center justify-center bg-[#d6d6d4]"><Caret /></span>
        </div>
        <span className="mx-[1px] h-3 w-px bg-[#e4e4e4]" />
        {EDIT_TOOLS.map((c, i) => (
          <button key={i} title="Edit points" className="mr-[1px] flex">
            <Icon><path d="M1 2l5 5M6 2L1 7" stroke={c} strokeWidth="2.2" /><path d="M9 5h3v3H9zM6 10h3v3H6zM13 9h2v2h-2zM12 13h3v2h-3z" fill="#4a1a22" /></Icon>
          </button>
        ))}
      </div>
    </div>
    <div className="flex-1" />
    <div className="flex w-[68px] items-center justify-end gap-1 border-t-2 border-b-2 border-t-black border-b-white bg-gradient-to-b from-[#727272] to-[#8b8b8b] pr-1"><Pin /><Cross /></div>
    <div className="w-[6px] border-r border-[#d5d8b0] bg-black" />
    <div className="w-[167px] bg-white" />
  </div>
);

const StatusBar = () => (
  <footer className="flex h-[15px] shrink-0 items-center rounded-bl-md bg-gradient-to-b from-[#505050] to-[#303030] pr-[8px] pl-[2px] whitespace-nowrap text-[#e4e4e4]">
    <span className="flex-1">For Help, press F1</span>
    <span className="h-[9px] w-[79px] bg-[#e8e8e6]" />
    <span className="ml-[43px] h-3 w-px bg-[#222]" />
    <span className="ml-[41px] h-3 w-px bg-[#222]" />
    <span className="ml-[40px] w-[142px] border-l border-[#222] pl-[4px]">Section Level -360.00</span>
    <span className="flex w-[129px] justify-between">
      <span className="text-[#bbb]">COMMAND</span><span>CAP</span><span>NUM</span><span className="text-[#aaa]">SCRL</span><span className="text-[#bbb]">READ</span>
    </span>
  </footer>
);

// ============ Dialog ============
const DialogButton = ({ label, className = '' }: { label: string; className?: string }) => (
  <button className={`h-[18px] rounded-[3px] border border-[#d0d0ce] bg-[#fdfdfd] ${className}`}>{label}</button>
);

const FindCommand = () => (
  <div role="dialog" aria-label="Find Command" className="absolute top-[228px] left-[434px] z-10 w-[420px] overflow-hidden rounded-lg bg-[#f0f0ee] font-['Noto_Sans','Open_Sans',sans-serif] text-[8px] text-[#111] shadow-[0_12px_26px_rgba(0,0,0,0.45)]">
    <header className="flex h-6 items-center bg-[#eef2f9] px-2">
      <Icon className="mr-1 size-[11px]"><path d="M0 2h16v12H0z" fill="#fff" stroke="#8a9a98" /><path d="M0 2h8v12H0z" fill="#2e8b74" /><path d="M9 4h5v8H9z" fill="#cfd8de" /></Icon>
      <h2 className="flex-1 text-[10px]">Find Command</h2>
      <button title="Close"><X className="size-3" strokeWidth={1.8} /></button>
    </header>
    <div className="flex items-center px-3 pt-[14px] pr-[14px]">
      <label htmlFor="filter" className="w-[29px]">Filter:</label>
      <input id="filter" defaultValue="GRAD" className="h-[19px] w-[289px] border-b border-[#999] bg-white px-1 pb-1 outline-none" />
      <span className="flex-1" />
      <DialogButton label="Apply" className="w-[62px]" />
    </div>
    <div className="mx-3 mt-[14px] flex h-[229px] flex-col border border-[#8c8c8c] bg-white">
      <div className="flex h-[213px]">
        <div className="flex-1 overflow-hidden">
          <table className="h-[218px] w-full table-fixed border-collapse text-left whitespace-nowrap">
            <thead>
              <tr className="h-[17px]">
                <th className="w-[101px] border-r border-[#e2e2e2] pl-1 font-normal">Name</th>
                <th className="w-[40px] border-r border-[#e2e2e2] pl-1 font-normal">Quick ...</th>
                <th className="pl-1 font-normal">Description</th>
              </tr>
            </thead>
            <tbody>
              {COMMANDS.map((c) => (
                <tr key={c.name} className="leading-3">
                  <td className="overflow-hidden pl-[3px]">
                    {c.name === 'gradient-percent-switch'
                      ? <span className="block w-24 bg-[#0a74c8] pl-px text-white">{c.name}</span>
                      : <span className="pl-px">{c.name}</span>}
                  </td>
                  <td className="pl-1">{c.quick}</td>
                  <td className="overflow-hidden pl-1">{c.description}</td>
                </tr>
              ))}
            </tbody>
          </table>
        </div>
        <div className="flex w-[14px] flex-col items-center bg-[#f5f5f3] pt-[31px]"><span className="h-[78px] w-1 bg-[#7c7c7c]" /></div>
      </div>
      <div className="flex flex-1 items-center bg-[#f5f5f3] pl-[14px]"><span className="h-1 w-[150px] bg-[#7c7c7c]" /></div>
    </div>
    <div className="flex justify-end gap-[9px] px-3 pt-[14px] pb-2">
      <button className="h-[18px] w-[58px] rounded-[3px] border border-[#2f7fbf] bg-[#e2eff8]">Run</button>
      <DialogButton label="Command Help" className="w-[94px]" />
      <DialogButton label="Copy To Clipboard" className="w-[85px]" />
      <DialogButton label="Cancel" className="w-[58px]" />
    </div>
  </div>
);

// ============ File explorer window ============
const Explorer = () => (
  <div className="overflow-hidden rounded-t-md border-t border-[#3a3a3a] bg-[#202020] font-['Noto_Sans','Open_Sans',sans-serif] text-[10px] text-[#f0f0f0]">
    <div className="flex h-[33px] items-end">
      <div className="ml-2 flex h-[26px] w-[199px] items-center rounded-t-md bg-[#2c2c2c] pl-[7px]">
        <Icon className="size-[13px]"><path d="M0 2h6l2 2h8v10H0z" fill="#e8b530" /><path d="M0 5h16v9H0z" fill="#fbdc6c" /></Icon>
        <span className="flex-1 pl-2 font-semibold">studio UG</span>
        <button title="Close tab" className="mr-3"><X className="size-[11px]" /></button>
      </div>
      <button title="New tab" className="mb-[7px] ml-[14px]"><Plus className="size-3" /></button>
      <div className="flex flex-1 items-center justify-end gap-[29px] self-start text-[#888]">
        <button title="Minimize"><Minus className="size-[10px]" /></button>
        <button title="Maximize"><Square className="size-[9px]" /></button>
        <button title="Close" className="-ml-3 h-6 w-[39px] bg-[#a61d22]" />
      </div>
    </div>
    <div className="flex h-10 items-center bg-[#2c2c2c] pr-[9px] text-[11px]">
      <div className="flex w-[170px] items-center gap-[27px] pl-[17px]">
        <button title="Back"><ArrowLeft className="size-[13px]" /></button>
        <button title="Forward" className="text-[#6a6a6a]"><ArrowRight className="size-[13px]" /></button>
        <button title="Up"><ArrowUp className="size-[13px]" /></button>
        <button title="Refresh"><RotateCw className="size-[13px]" /></button>
      </div>
      <nav className="flex h-[27px] flex-1 items-center rounded bg-[#383838] pl-[2px]">
        <a href="#backup" className="flex h-5 w-[112px] items-center gap-[6px] rounded bg-[#424242] pl-[7px] whitespace-nowrap">
          <Icon className="size-[13px]"><path d="M5 12H3a3 3 0 010-6 4 4 0 018-1 3 3 0 013 3" stroke="#4aa8dc" strokeWidth="1.4" /><circle cx="10.500" cy="10.500" r="5" fill="#4ab4e8" /><path d="M10.500 13V8M8.500 10l2-2 2 2" stroke="#12344a" strokeWidth="1.3" /></Icon>
          Iniciar respaldo
        </a>
        <ChevronRight className="mx-[6px] size-3" />
        <a href="#desktop" className="w-[54px] pl-[5px]">Escritorio</a>
        <ChevronRight className="mr-[10px] ml-[11px] size-3 shrink-0" />
        <a href="#carlos">Carlos</a>
        <ChevronRight className="mx-[11px] size-3 shrink-0" />
        <a href="#studio">studio UG</a>
      </nav>
      <div className="ml-[7px] flex h-[27px] w-[317px] items-center rounded bg-[#383838] px-3">
        <input aria-label="Buscar" placeholder="Buscar en studio UG" className="min-w-0 flex-1 bg-transparent outline-none placeholder:text-[#c8c8c8]" />
        <Search className="size-[11px]" />
      </div>
    </div>
    <div className="flex h-[22px] items-start overflow-hidden border-t border-[#3a3a3a] bg-[#191919] pt-[14px] pr-5 pl-[17px] text-[#d8d8d8]">
      <CirclePlus className="size-[13px] shrink-0" /><span className="ml-2 w-[48px] shrink-0">Nuevo ⌄</span>
      <span className="flex w-[257px] shrink-0 gap-[27px] pl-[22px] text-[#8fc4e0]">
        <Scissors className="size-[13px] -rotate-90 text-[#ccc]" /><Copy className="size-[13px]" /><Clipboard className="size-[13px] text-[#666]" /><TextCursorInput className="size-[13px]" /><Share className="size-[13px]" /><Trash2 className="size-[13px] text-[#ccc]" />
      </span>
      <span className="flex w-[95px] shrink-0 gap-2 pl-[5px]"><ArrowDownUp className="size-[13px] shrink-0" />Ordenar ⌄</span>
      <Icon className="size-[13px]"><path d="M2 3h12v10H2z" stroke="#ccc" strokeWidth="1.6" /></Icon><span className="ml-[6px] flex-1">Ver ⌄</span>
      <PanelRight className="size-[13px] text-[#8fc4e0]" /><span className="ml-2">Detalles</span>
    </div>
  </div>
);

const ExplorerStatus = () => (
  <footer className="mr-[2px] flex h-[18px] shrink-0 items-center gap-2 rounded-b-md border-b border-[#14244c] bg-[#191919] pr-2 pl-[11px] font-['Noto_Sans','Open_Sans',sans-serif] text-[9px] leading-3 text-[#ddd]">
    <span>8 elementos</span><span>|</span><span>1 elemento seleccionado</span><span>41.2 MB</span><span className="flex-1">|</span>
    <button title="Details view"><Icon className="size-[13px]"><path d="M1 1h14v14H1z" stroke="#999" /><path d="M3 4h10M3 8h10M3 12h10" stroke="#ddd" strokeWidth="1.4" /></Icon></button>
    <button title="Icons view" className="-mr-1"><Icon className="size-[15px]"><path d="M0 0h16v16H0z" fill="#6a6a6a" /><path d="M3 3h10v9H3z" fill="#fff" stroke="#111" /></Icon></button>
  </footer>
);

export default function App() {
  return (
    <div className="relative flex h-screen min-h-[560px] flex-col overflow-hidden bg-black pt-[21px] pb-[22px]">
      <div className="flex min-h-0 flex-1 flex-col bg-[#030a18] pl-[6px]">
        <div className="mr-[2px] shrink-0"><Explorer /></div>
        <main className="flex min-h-0 flex-1 flex-col bg-[#191919] font-['Noto_Sans','Open_Sans',sans-serif] text-[8px] leading-3">
          <StudioHeader />
          <Ribbon />
          <ViewToolbar />
          <div className="flex min-h-0 flex-1 bg-[#6f6f6f]">
            <div className="mr-[3px] flex w-[166px] shrink-0 flex-col"><SheetsPanel /><LoadedPanel /></div>
            <Center />
            <RightPanel />
          </div>
          <CommandBar />
          <StatusBar />
        </main>
        <ExplorerStatus />
      </div>

      <FindCommand />

      {/* Floating recorder widget */}
      <div className="absolute top-[25px] right-2 z-20 w-[35px] overflow-hidden rounded-[3px] bg-[#f2f2f2] font-['Noto_Sans',sans-serif] text-[8px] text-[#888]">
        <div className="flex h-[21px] items-center pl-[2px] text-[9px]"><span className="flex-1">P...</span><span className="flex h-4 w-[17px] items-center justify-center bg-[#d9d9d9] text-white">×</span></div>
        <button className="h-[17px] w-full rounded-[3px] border border-[#6cb0d8] bg-white text-[#111]">Start</button>
      </div>

      {/* Mouse pointer */}
      <svg viewBox="0 0 12 18" className="pointer-events-none absolute top-[552px] left-[547px] z-20 h-[14px] w-[9px]"><path d="M1 1v13l3-3 2.500 6 2.300-1L6.500 10.500H11z" fill="#fff" stroke="#111" /></svg>
    </div>
  );
}
